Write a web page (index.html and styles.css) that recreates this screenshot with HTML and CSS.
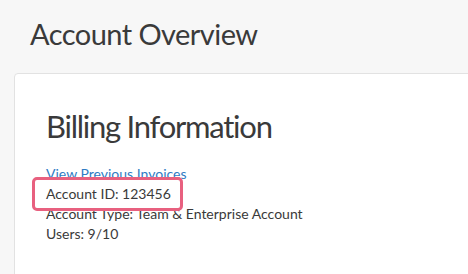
FILE: index.html
```html
<!DOCTYPE html>
<html>
<head>
<meta charset="utf-8">
<link rel="stylesheet" href="styles.css">
</head>
<body>
<div class="page">
  <h1 class="page-title">Account Overview</h1>
  <div class="card">
    <h2 class="card-title">Billing Information</h2>
    <div class="info">
      <a class="link" href="#">View Previous Invoices</a>
      <div class="row"><span class="highlight">Account ID: 123456</span></div>
      <div class="row">Account Type: Team &amp; Enterprise Account</div>
      <div class="row">Users: 9/10</div>
    </div>
  </div>
</div>
</body>
</html>
```
FILE: styles.css
```css
html, body {
  margin: 0;
  padding: 0;
  background: #f7f7f7;
  overflow: hidden;
}
.page {
  font-family: Lato, "Open Sans", sans-serif;
  color: #3a3a3a;
  padding: 14px 0 0 14px;
}
.page-title {
  margin: 0 0 0 16px;
  font-size: 29px;
  font-weight: 400;
  line-height: 40px;
  letter-spacing: -0.55px;
}
.card {
  margin-top: 19px;
  width: 520px;
  height: 260px;
  background: #fff;
  border: 1px solid #e2e2e2;
  border-radius: 4px;
  padding: 30px 31px;
  box-sizing: border-box;
}
.card-title {
  margin: 0;
  font-size: 31px;
  font-weight: 400;
  line-height: 44px;
  letter-spacing: -1.25px;
}
.info {
  margin-top: 16px;
  font-size: 14px;
  line-height: 20px;
}
.link {
  color: #2f7cc4;
  text-decoration: none;
  display: block;
}
.highlight {
  position: relative;
  display: inline-block;
}
.highlight::after {
  content: "";
  position: absolute;
  left: -14px;
  right: -12px;
  top: -7px;
  bottom: -7px;
  border: 3px solid #e8607f;
  border-radius: 5px;
}
```
